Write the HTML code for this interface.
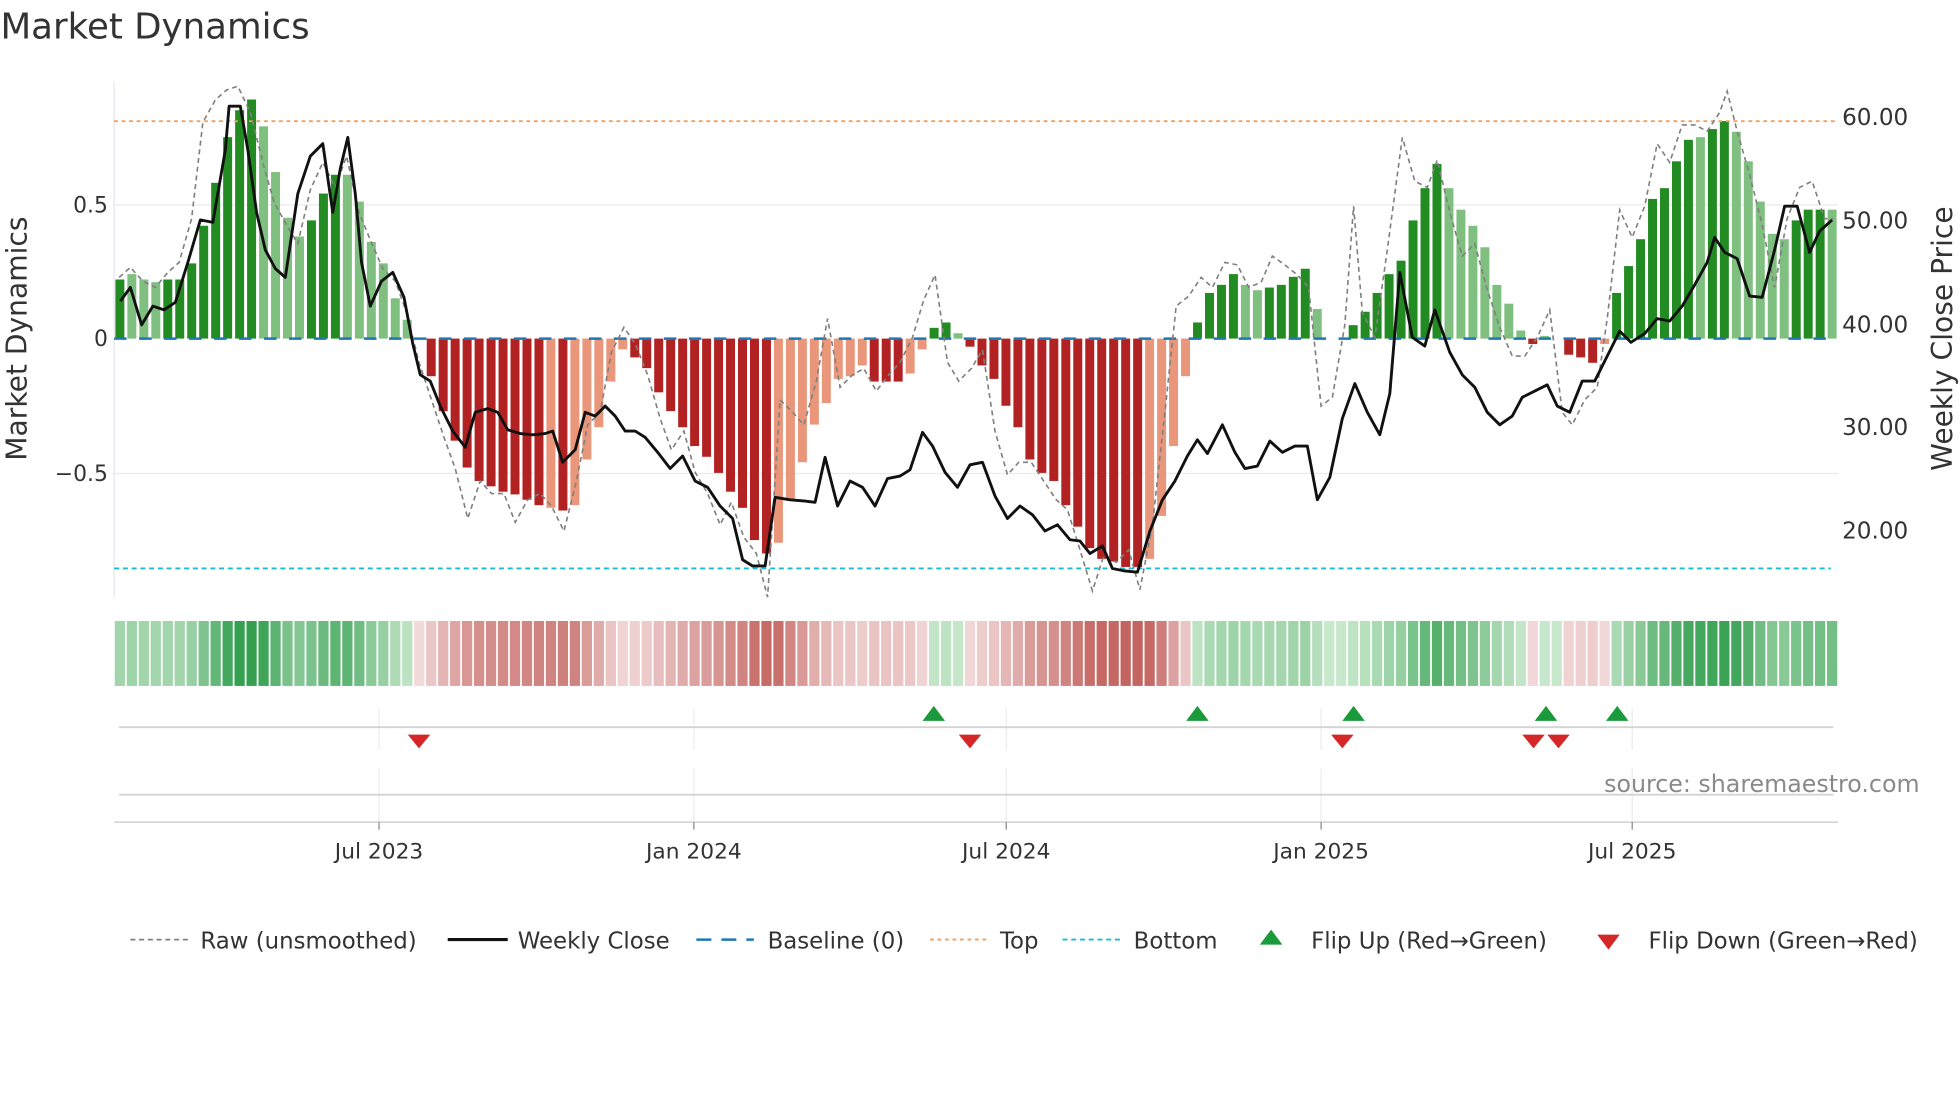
<!DOCTYPE html>
<html><head><meta charset="utf-8"><style>
html,body{margin:0;padding:0;background:#fff;width:1960px;height:1102px;overflow:hidden}
svg{display:block}
text{font-family:"DejaVu Sans","Liberation Sans",sans-serif;fill:#333}
</style></head><body>
<svg id="s" width="1960" height="1102" viewBox="0 0 1568 882" xmlns="http://www.w3.org/2000/svg">
<text x="0" y="31" font-size="28.5">Market Dynamics</text>
<line x1="91" y1="164" x2="1471" y2="164" stroke="#eaeaea" stroke-width="1"/>
<line x1="91" y1="379" x2="1471" y2="379" stroke="#eaeaea" stroke-width="1"/>
<line x1="91" y1="65" x2="91" y2="478" stroke="#e6e6ee" stroke-width="1"/>
<g id="bars"></g>
<line x1="91" y1="97" x2="1471" y2="97" stroke="#f0a060" stroke-width="1.5" stroke-dasharray="3,3"/>
<line x1="91" y1="455" x2="1465" y2="455" stroke="#17becf" stroke-width="1.5" stroke-dasharray="4,3"/>
<line x1="91" y1="271" x2="1471" y2="271" stroke="#1f77b4" stroke-width="2" stroke-dasharray="10,10"/>
<polyline id="raw" fill="none" stroke="#808080" stroke-width="1.3" stroke-dasharray="4,3"/>
<polyline id="px" fill="none" stroke="#111" stroke-width="2.3" stroke-linejoin="round"/>
<g font-size="17.5" text-anchor="end">
<text x="86" y="170">0.5</text><text x="86" y="277">0</text><text x="86" y="385">−0.5</text>
</g>
<g font-size="18.5">
<text x="1474" y="100">60.00</text><text x="1474" y="183">50.00</text><text x="1474" y="266">40.00</text><text x="1474" y="348">30.00</text><text x="1474" y="431">20.00</text>
</g>
<text transform="translate(21,271) rotate(-90)" font-size="22.5" text-anchor="middle">Market Dynamics</text>
<text transform="translate(1562,271) rotate(-90)" font-size="22.5" text-anchor="middle">Weekly Close Price</text>
<g id="heat"></g>
<g stroke="#ececec" stroke-width="1">
<line x1="303" y1="567" x2="303" y2="600"/><line x1="555" y1="567" x2="555" y2="600"/><line x1="805" y1="567" x2="805" y2="600"/><line x1="1057" y1="567" x2="1057" y2="600"/><line x1="1306" y1="567" x2="1306" y2="600"/>
<line x1="303" y1="615" x2="303" y2="658"/><line x1="555" y1="615" x2="555" y2="658"/><line x1="805" y1="615" x2="805" y2="658"/><line x1="1057" y1="615" x2="1057" y2="658"/><line x1="1306" y1="615" x2="1306" y2="658"/>
</g>
<line x1="95" y1="582" x2="1467" y2="582" stroke="#d4d4d4" stroke-width="1.5"/>
<line x1="95" y1="636" x2="1467" y2="636" stroke="#d4d4d4" stroke-width="1.5"/>
<line x1="91" y1="658" x2="1471" y2="658" stroke="#d0d0d0" stroke-width="1.2"/>
<g id="flips"></g>
<text x="1536" y="634" font-size="19" text-anchor="end" style="fill:#8a8a8a">source: sharemaestro.com</text>
<g stroke="#888" stroke-width="1"><line x1="303" y1="658" x2="303" y2="664"/><line x1="555" y1="658" x2="555" y2="664"/><line x1="805" y1="658" x2="805" y2="664"/><line x1="1057" y1="658" x2="1057" y2="664"/><line x1="1306" y1="658" x2="1306" y2="664"/></g>
<g font-size="17.4" text-anchor="middle">
<text x="303" y="687">Jul 2023</text><text x="555" y="687">Jan 2024</text><text x="805" y="687">Jul 2024</text><text x="1057" y="687">Jan 2025</text><text x="1306" y="687">Jul 2025</text>
</g>
<g font-size="18.3">
<line x1="104" y1="752" x2="150" y2="752" stroke="#808080" stroke-width="1.4" stroke-dasharray="4,3"/>
<text x="160" y="759">Raw (unsmoothed)</text>
<line x1="358" y1="752" x2="406" y2="752" stroke="#111" stroke-width="2.5"/>
<text x="414" y="759">Weekly Close</text>
<line x1="557" y1="752" x2="603" y2="752" stroke="#1f77b4" stroke-width="2" stroke-dasharray="12,8"/>
<text x="614" y="759">Baseline (0)</text>
<line x1="744" y1="752" x2="790" y2="752" stroke="#f0a060" stroke-width="1.5" stroke-dasharray="3,3"/>
<text x="800" y="759">Top</text>
<line x1="850" y1="752" x2="896" y2="752" stroke="#17becf" stroke-width="1.5" stroke-dasharray="4,3"/>
<text x="907" y="759">Bottom</text>
<polygon points="1017,744 1026,756 1008,756" fill="#1a9a3a"/>
<text x="1049" y="759">Flip Up (Red→Green)</text>
<polygon points="1278,748 1296,748 1287,760" fill="#d62728"/>
<text x="1319" y="759">Flip Down (Green→Red)</text>
</g>
</svg>
<script>
var d="0.22G,.24g,.22g,.21g,.22G,.22G,.28G,.42G,.58G,.75G,.85G,.89G,.79g,.62g,.45g,.38g,.44G,.54G,.61G,.61g,.51g,.36g,.28g,.15g,.07g,0r,-.14R,-.27R,-.38R,-.48R,-.53R,-.55R,-.57R,-.58R,-.60R,-.62R,-.63r,-.64R,-.62r,-.45r,-.33r,-.16r,-.04r,-.07R,-.11R,-.2R,-.27R,-.33R,-.4R,-.44R,-.5R,-.57R,-.63R,-.75R,-.8R,-.76r,-.6r,-.46r,-.32r,-.24r,-.15r,-.14r,-.1r,-.16R,-.16R,-.16R,-.13r,-.04r,.04G,.06G,.02g,-.03R,-.1R,-.15R,-.25R,-.33R,-.45R,-.5R,-.53R,-.62R,-.7R,-.78R,-.82R,-.83R,-.85R,-.85R,-.82r,-.66r,-.4r,-.14r,.06G,.17G,.2G,.24G,.2g,.18g,.19G,.2G,.23G,.26G,.11g,0g,0g,.05G,.1G,.17G,.24G,.29G,.44G,.56G,.65G,.56g,.48g,.42g,.34g,.2g,.13g,.03g,-.02R,.01g,0g,-.06R,-.07R,-.09R,-.02r,.17G,.27G,.37G,.52G,.56G,.66G,.74G,.75g,.78G,.81G,.77g,.66g,.51g,.39g,.37g,.44G,.48G,.48G,.48g".split(",");
var N=d.length,sp=1380/N,ns="http://www.w3.org/2000/svg",bars=document.getElementById("bars"),heat=document.getElementById("heat");
var col={G:"#228b22",g:"#7fbf7f",R:"#b22222",r:"#e9967a"};
function mk(p,t,a){var e=document.createElementNS(ns,t);for(var k in a)e.setAttribute(k,a[k]);p.appendChild(e);return e;}
function mix(a,b,t){return "rgb("+[0,1,2].map(function(i){return Math.round(a[i]+(b[i]-a[i])*t)}).join(",")+")";}
for(var i=0;i<N;i++){var c=d[i].slice(-1),v=parseFloat(d[i]),x=91+i*sp;
 var y=271-v*215,h=Math.abs(v*215);
 if(h>0.5)mk(bars,"rect",{x:x+1,y:Math.min(y,271),width:sp-2.4,height:h,fill:col[c]});
 var t=Math.min(1,Math.abs(v)/0.85),f;
 if(c=="G"||c=="g"||v>0)f=mix([200,232,204],[52,160,80],t);else f=mix([242,218,218],[196,100,96],t);
 mk(heat,"rect",{x:x+0.5,y:497,width:sp-1.4,height:52,fill:f});
}
var P="96,241 104,230 113,260 122,245 131,248 140,242 150,210 160,176 170,178 180,120 183,85 192,85 198,120 205,170 212,200 220,215 228,222 238,155 248,125 258,115 266,170 272,135 278,110 284,155 289,210 296,245 305,225 314,218 323,238 330,275 336,300 344,305 352,325 362,345 372,358 380,330 390,327 398,330 406,344 416,347 426,348 436,347 442,345 450,370 460,360 468,330 476,333 484,325 492,333 500,345 508,345 516,350 526,362 536,375 546,365 556,385 566,390 576,405 586,415 594,448 602,453 612,453 620,398 632,400 644,401 652,402 660,366 670,405 680,385 690,390 700,405 710,383 720,381 728,376 738,346 746,357 756,378 766,390 776,372 786,370 796,397 806,415 816,405 826,412 836,425 846,420 856,432 864,433 872,443 882,437 890,455 900,457 910,458 920,425 930,400 940,385 950,365 958,352 966,363 978,340 988,362 996,375 1006,373 1016,353 1026,362 1036,357 1046,357 1054,400 1064,382 1074,335 1084,307 1094,330 1104,348 1112,315 1120,218 1130,270 1140,277 1148,248 1160,282 1170,300 1180,310 1190,330 1200,340 1210,333 1218,318 1228,313 1238,308 1246,325 1256,330 1266,305 1276,305 1286,285 1296,265 1305,274 1316,267 1326,255 1336,257 1346,245 1356,228 1366,210 1372,190 1380,202 1390,207 1400,237 1410,238 1420,200 1428,165 1438,165 1448,202 1456,185 1466,176";
document.getElementById("px").setAttribute("points",P);
var R="95,222 104,214 114,225 124,230 134,218 143,210 153,175 162,98 172,80 181,72 190,69 200,90 210,130 219,162 229,180 238,195 248,152 258,130 268,150 277,125 287,170 296,192 306,215 316,225 325,250 335,290 345,320 355,350 364,375 374,415 384,385 393,395 403,395 412,418 422,400 432,395 441,405 451,425 461,385 470,340 480,330 489,282 499,262 508,275 518,300 528,335 537,360 547,345 556,378 566,395 576,420 585,402 595,430 605,443 614,478 624,320 634,330 643,340 653,305 662,255 672,310 682,300 691,295 701,313 711,300 720,290 730,270 739,240 748,220 758,290 767,305 777,295 786,280 796,345 806,380 815,370 825,370 835,385 845,400 854,408 864,440 874,473 883,445 893,450 903,440 912,472 922,420 932,330 941,245 951,237 961,222 970,230 980,210 990,212 999,230 1009,226 1018,205 1028,212 1038,220 1047,230 1057,325 1066,318 1076,260 1083,165 1090,250 1100,270 1110,200 1122,110 1132,145 1142,150 1150,128 1160,170 1170,205 1180,195 1190,232 1200,262 1210,285 1220,285 1230,270 1240,248 1250,330 1258,340 1268,320 1278,310 1286,255 1296,168 1306,190 1316,165 1326,115 1336,130 1346,100 1356,100 1366,105 1376,90 1382,73 1390,105 1400,140 1410,180 1420,230 1430,175 1440,150 1450,145 1460,175 1467,175";
document.getElementById("raw").setAttribute("points",R);
var fl=document.getElementById("flips");
[747,958,1083,1237,1294].forEach(function(x){mk(fl,"polygon",{points:(x)+",565 "+(x+9)+",577 "+(x-9)+",577",fill:"#1a9a3a"});});
[335,776,1074,1227,1247].forEach(function(x){mk(fl,"polygon",{points:(x-9)+",588 "+(x+9)+",588 "+x+",599",fill:"#d62728"});});
</script>
</body></html>
